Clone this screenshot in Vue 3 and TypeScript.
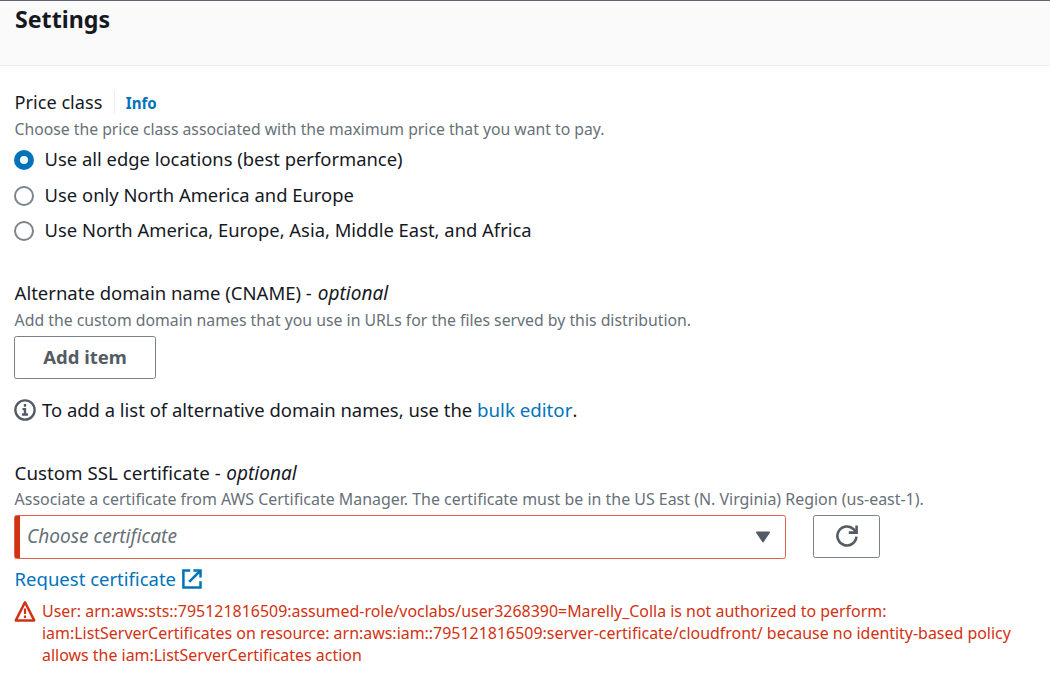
<script setup lang="ts">
import { ref } from 'vue'

interface PriceOption {
  id: string
  label: string
}

const options: PriceOption[] = [
  { id: 'all', label: 'Use all edge locations (best performance)' },
  { id: 'na-eu', label: 'Use only North America and Europe' },
  { id: 'na-eu-asia', label: 'Use North America, Europe, Asia, Middle East, and Africa' },
]
const selected = ref('all')

const errorLines: string[] = [
  'User: arn:aws:sts::795121816509:assumed-role/voclabs/user3268390=Marelly_Colla is not authorized to perform:',
  'iam:ListServerCertificates on resource: arn:aws:iam::795121816509:server-certificate/cloudfront/ because no identity-based policy',
  'allows the iam:ListServerCertificates action',
]
</script>

<template>
  <main class="panel">
    <header class="header">
      <h2>Settings</h2>
    </header>

    <section class="field price">
      <div class="label-row">
        <span class="label price-label">Price class</span>
        <a class="info">Info</a>
      </div>
      <p class="desc price-desc">Choose the price class associated with the maximum price that you want to pay.</p>
      <div class="radios">
        <label v-for="o in options" :key="o.id" class="radio" @click="selected = o.id">
          <span class="dot" :class="{ on: selected === o.id }"></span>
          <span>{{ o.label }}</span>
        </label>
      </div>
    </section>

    <section class="field cname">
      <div class="label cname-label">Alternate domain name (CNAME) - <em>optional</em></div>
      <p class="desc cname-desc">Add the custom domain names that you use in URLs for the files served by this distribution.</p>
      <button class="btn add">Add item</button>
      <div class="hint">
        <svg class="hint-icon" viewBox="0 0 16 16" width="22" height="22" fill="none" stroke="#545b64">
          <circle cx="8" cy="8" r="7" stroke-width="1.7" />
          <path d="M8 3.7v2M6.2 7.4H8v3.7M5.8 11.3h4.4" stroke-width="1.7" />
        </svg>
        <span>To add a list of alternative domain names, use the <a class="bulk">bulk editor</a>.</span>
      </div>
    </section>

    <section class="field ssl">
      <div class="label ssl-label">Custom SSL certificate - <em>optional</em></div>
      <p class="desc ssl-desc">Associate a certificate from AWS Certificate Manager. The certificate must be in the US East (N. Virginia) Region (us-east-1).</p>
      <div class="controls">
        <div class="select">
          <span class="placeholder">Choose certificate</span>
          <svg viewBox="0 0 16 12" width="16" height="12">
            <path d="M1.8 1.3h12.4L8 10.6z" fill="#545b64" stroke="#545b64" stroke-width="1.6" stroke-linejoin="round" />
          </svg>
        </div>
        <button class="btn refresh" aria-label="Refresh">
          <svg viewBox="0 0 24 24" width="24" height="24" fill="none" stroke="#545b64" stroke-width="2.6">
            <path d="M21.4 12.6a9.5 9.5 0 1 1-2.6-7.2l2 2.4" />
            <path d="M21.6 1.4v7.2h-7.8" />
          </svg>
        </button>
      </div>
      <a class="request">
        <span>Request certificate</span>
        <svg viewBox="0 0 20 20" width="20" height="20" fill="none" stroke="#0073bb" stroke-width="2.5">
          <path d="M8.2 1.5H1.4v17.1h17.1v-6.4" />
          <path d="M11.4 1.5h7.1v7.1M18 2L7.2 12.8" />
        </svg>
      </a>
      <div class="error">
        <svg viewBox="0 0 22 22" width="22" height="22" fill="none" stroke="#d13212">
          <path d="M11 2.3L20.2 20.4H1.8z" stroke-width="2.5" stroke-linejoin="round" />
          <path d="M11 8.4v5.5M11 15.4v2.5" stroke-width="2.2" />
        </svg>
        <div class="error-text">
          <div v-for="line in errorLines" :key="line">{{ line }}</div>
        </div>
      </div>
    </section>
  </main>
</template>

<style>
body {
  background: #fff;
}
</style>

<style scoped>
.panel {
  width: 1050px;
  height: 683px;
  box-sizing: border-box;
  overflow: hidden;
  border-top: 1px solid #5f6472;
  background: #fff;
  color: #16191f;
  font: 18.5px/24px "Noto Sans", sans-serif;
  white-space: nowrap;
}
.header {
  height: 65px;
  box-sizing: border-box;
  padding-left: 15px;
  background: #fafafa;
  border-bottom: 1px solid #eaeded;
}
h2 {
  margin: 0;
  font-size: 23.2px;
  line-height: 36px;
  font-weight: 700;
}
.field {
  padding-left: 14px;
}
.label,
.desc {
  padding-left: 0.6px;
}
.price {
  padding-top: 24px;
}
.label-row {
  display: flex;
  align-items: center;
  height: 24px;
}
.price-label {
  font-size: 18.15px;
}
.info {
  margin-left: 11.5px;
  padding: 2px 0 0 11px;
  border-left: 1px solid #eaeded;
  color: #0073bb;
  font-size: 15.1px;
  line-height: 22px;
  font-weight: 700;
}
a {
  color: #0073bb;
}
em {
  margin-left: 1.2px;
  font-size: 19px;
}
.desc {
  margin: 4px 0 0;
  color: #687078;
  font-size: 15.95px;
  line-height: 22px;
}
.price-desc {
  font-size: 15.74px;
}
.cname-desc {
  font-size: 15.8px;
}
.radios {
  display: flex;
  flex-direction: column;
  gap: 11.5px;
  padding-top: 7px;
}
.radio {
  display: flex;
  align-items: center;
  font-size: 18.4px;
}
.dot {
  width: 20px;
  height: 20px;
  box-sizing: border-box;
  margin: 2px 10.6px 0 0;
  border: 2px solid #7d848b;
  border-radius: 50%;
}
.dot.on {
  border: 6px solid #0073bb;
}
.cname {
  padding-top: 38.5px;
}
.btn {
  display: flex;
  align-items: center;
  justify-content: center;
  box-sizing: border-box;
  padding: 0;
  background: #fff;
  border: 1px solid #7a8188;
  border-radius: 2.5px;
  color: #545b64;
}
.add {
  width: 142px;
  height: 43px;
  margin-top: 5px;
  font: 700 18.5px/24px "Noto Sans", sans-serif;
}
.hint {
  display: flex;
  margin-top: 19px;
  font-size: 18.45px;
}
.hint-icon {
  margin: 1px 6px 0 0;
}
.bulk {
  font-size: 18.7px;
}
.ssl {
  padding-top: 39px;
}
.ssl-label {
  font-size: 18.75px;
}
.ssl-label em {
  margin-left: 0.6px;
}
.ssl-desc {
  margin-top: 3px;
}
.controls {
  display: flex;
  gap: 27px;
  margin-top: 5px;
}
.select {
  display: flex;
  align-items: center;
  justify-content: space-between;
  width: 772px;
  height: 44px;
  box-sizing: border-box;
  padding: 0 14px 0 12px;
  border: 1px solid #e4604a;
  border-radius: 2.5px;
  background: linear-gradient(to right, #d13212 5px, #fff 5px);
}
.placeholder {
  padding-bottom: 2px;
  color: #687078;
  font-size: 19.1px;
  font-style: italic;
}
.refresh {
  width: 67px;
  height: 43px;
}
.request {
  display: flex;
  gap: 6px;
  margin-top: 8px;
  padding-left: 0.6px;
  font-size: 18.5px;
}
.request svg {
  margin-top: 2px;
}
.error {
  display: flex;
  gap: 6px;
  margin-top: 9px;
  color: #d13212;
  font-size: 15.94px;
  line-height: 22px;
}
</style>
